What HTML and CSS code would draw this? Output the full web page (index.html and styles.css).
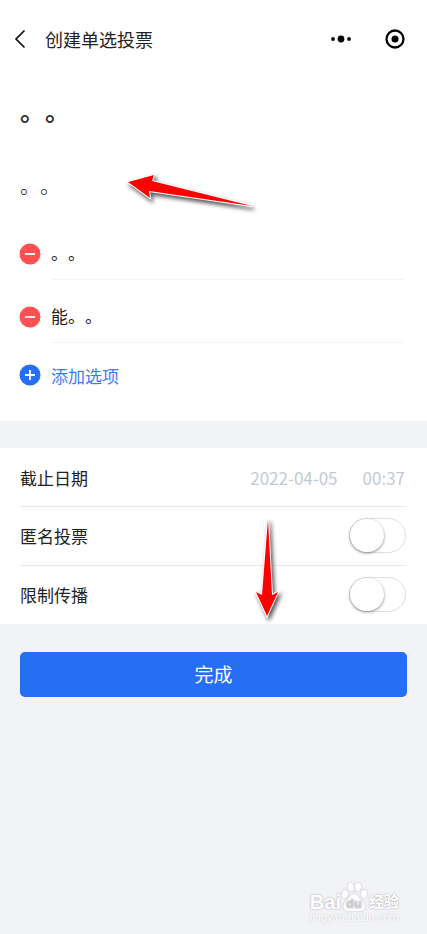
FILE: index.html
```html
<!DOCTYPE html>
<html lang="zh-CN">
<head>
  <meta charset="UTF-8">
  <meta name="viewport" content="width=device-width, initial-scale=1.0">
  <title>创建单选投票</title>
  <link rel="stylesheet" href="styles.css">
</head>
<body>

  <header class="navbar">
    <button type="button" class="icon-btn" aria-label="返回">
      <svg width="12" height="20" viewBox="0 0 12 20"><path d="M10.5 1.5 2 10l8.500 8.500" fill="none" stroke="#111" stroke-width="1.700"/></svg>
    </button>
    <h1>创建单选投票</h1>
    <button type="button" class="icon-btn" aria-label="更多">
      <svg width="22" height="20" viewBox="0 0 22 20"><circle cx="3" cy="10" r="1.900"/><circle cx="11" cy="10" r="3.400"/><circle cx="19" cy="10" r="1.900"/></svg>
    </button>
    <button type="button" class="icon-btn close" aria-label="关闭">
      <svg width="20" height="20" viewBox="0 0 20 20"><circle cx="10" cy="10" r="8.500" fill="none" stroke="#000" stroke-width="2.300"/><circle cx="10" cy="10" r="3.500"/></svg>
    </button>
  </header>

  <form>
    <section class="content">
      <input type="text" class="title" aria-label="投票标题" value="。。">
      <input type="text" class="desc" aria-label="补充描述" value="。。">

      <div class="option">
        <button type="button" class="icon-btn" aria-label="删除选项">
          <svg width="22" height="22" viewBox="0 0 22 22"><circle cx="11" cy="11" r="10.500" fill="#ff5150"/><path d="M6 11h10" stroke="#fff" stroke-width="1.800"/></svg>
        </button>
        <input type="text" aria-label="选项1" value="。。">
      </div>
      <div class="option">
        <button type="button" class="icon-btn" aria-label="删除选项">
          <svg width="22" height="22" viewBox="0 0 22 22"><circle cx="11" cy="11" r="10.500" fill="#ff5150"/><path d="M6 11h10" stroke="#fff" stroke-width="1.800"/></svg>
        </button>
        <input type="text" aria-label="选项2" value="能。。">
      </div>
      <button type="button" class="add">
        <svg width="22" height="22" viewBox="0 0 22 22"><circle cx="11" cy="11" r="10.500" fill="#246ff3"/><path d="M6 11h10M11 6v10" stroke="#fff" stroke-width="1.800"/></svg>
        添加选项
      </button>
    </section>

    <section class="settings">
      <div class="row">
        <span>截止日期</span>
        <div class="deadline">
          <button type="button">2022-04-05</button>
          <button type="button">00:37</button>
        </div>
      </div>
      <div class="row">
        <label for="anonymous">匿名投票</label>
        <input type="checkbox" class="switch" id="anonymous">
      </div>
      <div class="row">
        <label for="limit">限制传播</label>
        <input type="checkbox" class="switch" id="limit">
      </div>
    </section>

    <button type="submit" class="submit">完成</button>
  </form>

  <svg class="arrow arrow-left" width="150" height="60" viewBox="0 0 150 60">
    <path d="M8 22 34 15 32 21 132 46 29 31 30 38Z"/>
  </svg>
  <svg class="arrow arrow-down" width="50" height="120" viewBox="0 0 50 120">
    <path d="M23 10 27 86 33 83 22 107 11 83 17 86Z"/>
  </svg>

  <div class="watermark">
    <div class="brand">
      <span>Bai</span>
      <svg width="26" height="30" viewBox="0 0 26 30">
        <ellipse cx="4" cy="12" rx="3" ry="4"/>
        <ellipse cx="10" cy="5" rx="3" ry="4"/>
        <ellipse cx="17" cy="5" rx="3" ry="4"/>
        <ellipse cx="23" cy="12" rx="3" ry="4"/>
        <path d="M13 12c-4 0-5 4-8 7-5 5-2 10 3 10h11c5 0 7-5 2-10-3-3-4-7-8-7Z"/>
        <text x="13" y="26" text-anchor="middle">du</text>
      </svg>
      <span class="brand-cn">经验</span>
    </div>
    <div class="site">jingyan.baidu.com</div>
  </div>

</body>
</html>
```

FILE: styles.css
```css
* {
  box-sizing: border-box;
}
body {
  position: relative;
  min-height: 100vh;
  margin: 0;
  background-color: #f2f3f7;
  color: #222;
  font-family: "Noto Sans CJK SC", sans-serif;
  font-size: 17px;
}
button, input {
  margin: 0;
  padding: 0;
  border: 0;
  background: none;
  color: inherit;
  font: inherit;
}
input {
  width: 100%;
  min-width: 0;
  outline: none;
  text-spacing-trim: space-all;
}
svg {
  display: block;
  flex: none;
}

.navbar {
  display: flex;
  align-items: center;
  height: 78px;
  padding: 0 22px 0 14px;
  background-color: #fff;
}
.navbar h1 {
  flex: 1;
  margin: 0 0 0 19px;
  font-size: 18px;
  font-weight: 400;
}
.navbar .close {
  margin-left: 33px;
}

.content {
  padding: 12px 23px 14px 19px;
  background-color: #fff;
}
.title, .desc {
  display: block;
  height: 40px;
  padding-left: 1px;
}
.title {
  color: #333;
  font-size: 25px;
  font-weight: 700;
}
.desc {
  margin: 35px 0 12px;
  font-size: 20px;
  font-weight: 300;
}
.option {
  display: flex;
  align-items: center;
  gap: 10px;
}
.option .icon-btn {
  padding-top: 10px;
}
.option input {
  height: 63px;
  padding-top: 8px;
  border-bottom: 1px solid #f4f4f4;
}
.add {
  display: flex;
  align-items: center;
  gap: 10px;
  height: 64px;
  color: #3a7cf5;
}

.settings {
  margin-top: 27px;
  padding: 0 21px 0 20px;
  background-color: #fff;
}
.row {
  display: flex;
  align-items: center;
  justify-content: space-between;
  height: 58px;
}
.row + .row {
  height: 59px;
  padding-bottom: 2px;
  border-top: 1px solid #e9e9eb;
}
.deadline {
  display: flex;
  gap: 25px;
  padding-right: 1px;
  color: #c3c9d3;
}
.switch {
  appearance: none;
  width: 57px;
  height: 35px;
  border: 1px solid #dbe0db;
  border-radius: 18px;
  background-color: #fff;
}
.switch::before {
  content: "";
  display: block;
  width: 34px;
  height: 33px;
  border-radius: 17px;
  background-color: #fff;
  box-shadow: 0 1px 3px #888;
}
.switch:checked {
  background-color: #246ff3;
}
.switch:checked::before {
  margin-left: auto;
}

.submit {
  display: block;
  width: calc(100% - 40px);
  height: 45px;
  margin: 28px 20px 0;
  padding-bottom: 2px;
  border-radius: 5px;
  background-color: #246ff3;
  color: #fff;
  font-size: 19px;
}

/* hint arrows over the form */
.arrow {
  position: absolute;
  fill: #f00;
  stroke: #fff;
  stroke-width: 2;
  paint-order: stroke;
  filter: drop-shadow(2px 3px 2px #555);
  pointer-events: none;
}
.arrow-left {
  top: 160px;
  left: 120px;
}
.arrow-down {
  top: 509px;
  left: 245px;
}

.watermark {
  position: absolute;
  right: 28px;
  bottom: 11px;
  color: #fff;
  font-family: "Liberation Sans", "Noto Sans CJK SC", sans-serif;
  line-height: 1;
  text-shadow: 0 0 2px #999;
}
.brand {
  display: flex;
  align-items: flex-end;
  font-size: 20px;
  font-weight: 700;
}
.brand svg {
  fill: #fff;
  filter: drop-shadow(0 0 1px #bbb);
}
.brand text {
  fill: #ccced4;
  font-size: 13px;
}
.brand-cn {
  margin-left: 2px;
  font-size: 15px;
  line-height: 20px;
}
.site {
  font-size: 11px;
  text-shadow: 0 0 2px #bbb;
}
```
